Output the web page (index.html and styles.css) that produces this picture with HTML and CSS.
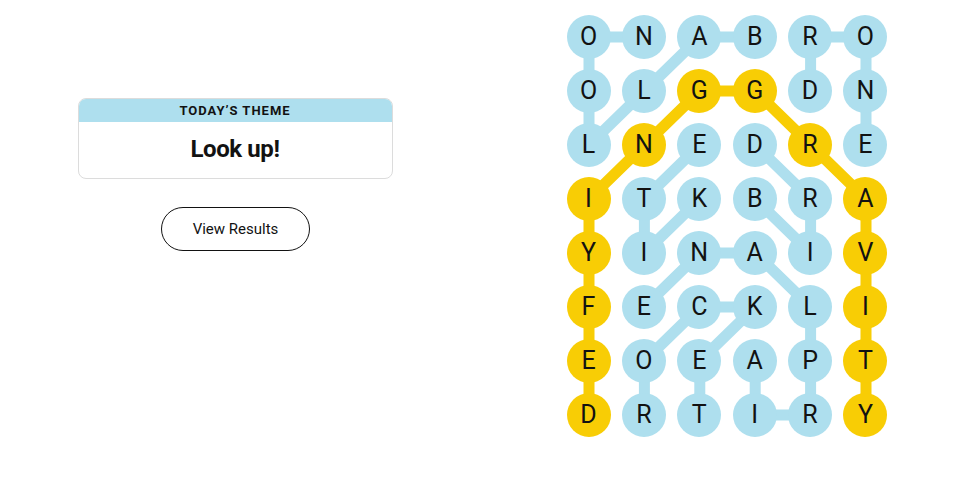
FILE: index.html
```html
<!DOCTYPE html>
<html lang="en">
<head>
<meta charset="utf-8">
<title>Strands</title>
<link rel="stylesheet" href="styles.css">
</head>
<body>
<main class="game">
  <section class="side">
    <div class="theme-card">
      <div class="theme-head">TODAY’S THEME</div>
      <div class="theme-body">Look up!</div>
    </div>
    <button class="results-btn" type="button">View Results</button>
  </section>
  <section class="board">
    <svg class="links" width="321" height="422" viewBox="0 0 321 422" aria-hidden="true">
      <g class="blue-links">
        <polyline points="188.2,22 132.8,22 77.4,76 22,130 22,76 22,22 77.4,22"/>
        <polyline points="243.6,76 243.6,22 299,22 299,76 299,130"/>
        <polyline points="132.8,184 77.4,238 77.4,184 132.8,130"/>
        <polyline points="188.2,184 243.6,238 243.6,184 188.2,130"/>
        <polyline points="188.2,346 188.2,400 243.6,400 243.6,346 243.6,292 188.2,238 132.8,238 77.4,292"/>
        <polyline points="77.4,400 77.4,346 132.8,292 188.2,292 132.8,346 132.8,400"/>
      </g>
      <g class="gold-links">
        <polyline points="22,400 22,346 22,292 22,238 22,184 77.4,130 132.8,76 188.2,76 243.6,130 299,184 299,238 299,292 299,346 299,400"/>
      </g>
    </svg>
    <div class="grid">
      <span class="cell">O</span><span class="cell">N</span><span class="cell">A</span><span class="cell">B</span><span class="cell">R</span><span class="cell">O</span>
      <span class="cell">O</span><span class="cell">L</span><span class="cell gold">G</span><span class="cell gold">G</span><span class="cell">D</span><span class="cell">N</span>
      <span class="cell">L</span><span class="cell gold">N</span><span class="cell">E</span><span class="cell">D</span><span class="cell gold">R</span><span class="cell">E</span>
      <span class="cell gold">I</span><span class="cell">T</span><span class="cell">K</span><span class="cell">B</span><span class="cell">R</span><span class="cell gold">A</span>
      <span class="cell gold">Y</span><span class="cell">I</span><span class="cell">N</span><span class="cell">A</span><span class="cell">I</span><span class="cell gold">V</span>
      <span class="cell gold">F</span><span class="cell">E</span><span class="cell">C</span><span class="cell">K</span><span class="cell">L</span><span class="cell gold">I</span>
      <span class="cell gold">E</span><span class="cell">O</span><span class="cell">E</span><span class="cell">A</span><span class="cell">P</span><span class="cell gold">T</span>
      <span class="cell gold">D</span><span class="cell">R</span><span class="cell">T</span><span class="cell">I</span><span class="cell">R</span><span class="cell gold">Y</span>
    </div>
  </section>
</main>
</body>
</html>
```

FILE: styles.css
```css
* { box-sizing: border-box; }

html, body {
  margin: 0;
  padding: 0;
  background: #ffffff;
  color: #121212;
  font-family: Roboto, "Liberation Sans", Arial, sans-serif;
}

.game {
  display: flex;
  align-items: flex-start;
  width: 963px;
  height: 478px;
}

.side {
  width: 471px;
  padding-top: 98px;
  display: flex;
  flex-direction: column;
  align-items: center;
}

.theme-card {
  width: 315px;
  height: 81px;
  border: 1px solid #dcdcdc;
  border-radius: 8px;
  overflow: hidden;
  margin-right: 1px;
}

.theme-head {
  background: #aedfee;
  height: 24px;
  display: flex;
  align-items: center;
  justify-content: center;
  font-size: 13px;
  font-weight: 700;
  letter-spacing: 1px;
  color: #121212;
  margin: -1px -1px 0;
}

.theme-body {
  height: 55px;
  display: flex;
  align-items: center;
  justify-content: center;
  font-size: 24px;
  font-weight: 700;
  letter-spacing: -0.4px;
  color: #121212;
  padding-bottom: 1px;
}

.results-btn {
  margin-top: 28px;
  width: 149px;
  height: 44px;
  border: 1px solid #121212;
  border-radius: 22px;
  background: #ffffff;
  font-family: inherit;
  font-size: 15px;
  color: #121212;
  padding: 0;
}

.board {
  position: relative;
  margin-left: 95.5px;
  margin-top: 14.5px;
  width: 321px;
  height: 422px;
}

.links {
  position: absolute;
  left: 0;
  top: 0;
}

.links polyline {
  fill: none;
  stroke-width: 11;
  stroke-linejoin: round;
  stroke-linecap: round;
}

.blue-links polyline { stroke: #aedfee; }
.gold-links polyline { stroke: #f8cd05; }

.grid {
  position: relative;
  display: grid;
  grid-template-columns: repeat(6, 44px);
  grid-auto-rows: 44px;
  column-gap: 11.4px;
  row-gap: 10px;
}

.cell {
  width: 44px;
  height: 44px;
  border-radius: 50%;
  background: #aedfee;
  display: flex;
  align-items: center;
  justify-content: center;
  font-size: 25px;
  font-weight: 400;
  color: #121212;
  line-height: 1;
}

.cell.gold { background: #f8cd05; }
```
